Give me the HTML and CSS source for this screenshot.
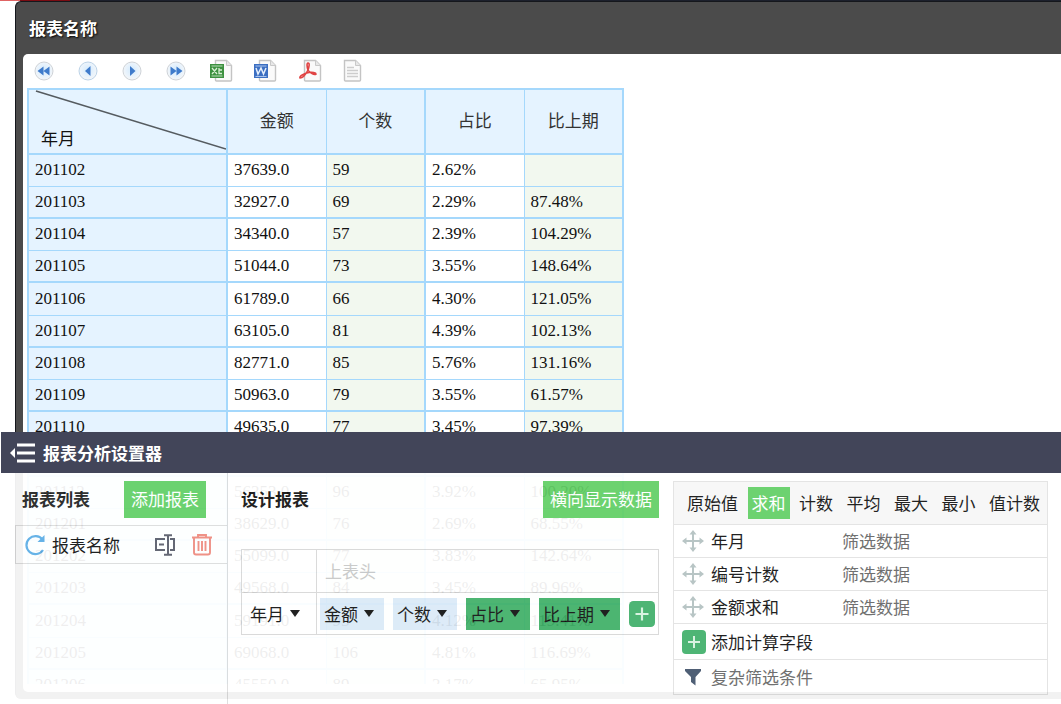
FILE: index.html
```html
<!DOCTYPE html>
<html lang="zh-CN">
<head>
<meta charset="utf-8">
<title>报表分析设置器</title>
<link rel="stylesheet" href="styles.css">
</head>
<body>
<svg class="defs" aria-hidden="true">
  <defs>
    <radialGradient id="ball" cx=".5" cy=".45" r=".55"><stop offset="0" stop-color="#d3eafc"/><stop offset=".65" stop-color="#e9f3fc"/><stop offset="1" stop-color="#f6f6f6"/></radialGradient>
    <g id="page"><path d="M4.500 1.500h11l5 5v14.500q0 1-1 1h-14q-1 0-1-1z" fill="#fafafa" stroke="#c4c4c4" stroke-width="1.400"/><path d="M15.500 1.500v5h5" fill="#e8e8e8" stroke="#c9c9c9"/></g>
    <g id="move" fill="none" stroke="#b3c1c1" stroke-width="2"><path d="M11 2v18M2 11h18"/><path d="M11 0l3.500 4.500h-7zM11 22l3.500-4.500h-7zM0 11l4.500-3.500v7zM22 11l-4.500-3.500v7z" fill="#b3c1c1" stroke="none"/></g>
    <g id="plus"><rect width="24" height="24" rx="4" fill="#41b06b"/><path d="M12 6v12M6 12h12" stroke="#d5f3df" stroke-width="2"/></g>
  </defs>
</svg>
<main class="window">
  <h1 class="window-title">报表名称</h1>
  <section class="report">
    <div class="toolbar">
      <button aria-label="首页"><svg width="20" height="20" viewBox="0 0 20 20"><circle cx="10" cy="10" r="9" fill="url(#ball)" stroke="#cfd3d8"/><path d="M9.500 5.500v9L3.500 10zM15.500 5.500v9l-6-4.500z" fill="#3f7bcb"/></svg></button>
      <button aria-label="上一页"><svg width="20" height="20" viewBox="0 0 20 20"><circle cx="10" cy="10" r="9" fill="url(#ball)" stroke="#bcd3e8"/><path d="M12.500 5v10L7 10z" fill="#3f7bcb"/></svg></button>
      <button aria-label="下一页"><svg width="20" height="20" viewBox="0 0 20 20"><circle cx="10" cy="10" r="9" fill="url(#ball)" stroke="#cfd3d8"/><path d="M8 5v10l5.500-5z" fill="#3f7bcb"/></svg></button>
      <button aria-label="末页"><svg width="20" height="20" viewBox="0 0 20 20"><circle cx="10" cy="10" r="9" fill="url(#ball)" stroke="#cfd3d8"/><path d="M4.500 5.500v9l6-4.500zM10.500 5.500v9l6-4.500z" fill="#3f7bcb"/></svg></button>
      <button aria-label="导出表格"><svg width="24" height="24" viewBox="0 0 24 24"><use href="#page" x="1"/><path d="M0 5h14v14H0z" fill="#3d9140"/><path d="M1.500 7h11M1.500 17h11" stroke="#b9dcb7"/><path d="M2 9l5 6M7 9l-5 6M9 9v5.500h3M9 11h3" stroke="#d9f0d5" stroke-width="1.300" fill="none"/></svg></button>
      <button aria-label="导出文档"><svg width="24" height="24" viewBox="0 0 24 24"><use href="#page" x="1"/><path d="M0 5h14v14H0z" fill="#3c6fc2"/><path d="M1.500 7h11M1.500 17.500h11" stroke="#a9c4ec"/><path d="M2 9l2 6 3-6 2.500 6L12 9" stroke="#e5effc" stroke-width="1.500" fill="none"/></svg></button>
      <button aria-label="导出打印稿"><svg width="24" height="24" viewBox="0 0 24 24"><use href="#page" x="2"/><path d="M10 4c2 0 1 4 0 7-2 4-5 8-8 8-1-2 5-5 9-5.500 3-.5 7 0 7 1.500-2 1.500-7-2-8-4-1-3-1.500-7 0-7z" fill="none" stroke="#e04343" stroke-width="1.600"/></svg></button>
      <button aria-label="导出文本"><svg width="24" height="24" viewBox="0 0 24 24"><use href="#page" x="-2"/><path d="M5 8.500h7M5 11.500h11M5 14.500h11M5 17.500h11" stroke="#cdcdcd" stroke-width="1.300"/></svg></button>
    </div>
    <div class="table-area">
    <table class="data">
      <colgroup><col class="col-month"><col><col><col><col></colgroup>
      <thead><tr><th class="corner"><svg viewBox="0 0 198 64" preserveAspectRatio="none" aria-hidden="true"><path d="M7 1L198 60" stroke="#555b60" stroke-width="1.500"/></svg><span>年月</span></th><th>金额</th><th>个数</th><th>占比</th><th>比上期</th></tr></thead>
      <tbody>
        <tr><th>201102</th><td>37639.0</td><td>59</td><td>2.62%</td><td></td></tr>
        <tr><th>201103</th><td>32927.0</td><td>69</td><td>2.29%</td><td>87.48%</td></tr>
        <tr><th>201104</th><td>34340.0</td><td>57</td><td>2.39%</td><td>104.29%</td></tr>
        <tr><th>201105</th><td>51044.0</td><td>73</td><td>3.55%</td><td>148.64%</td></tr>
        <tr><th>201106</th><td>61789.0</td><td>66</td><td>4.30%</td><td>121.05%</td></tr>
        <tr><th>201107</th><td>63105.0</td><td>81</td><td>4.39%</td><td>102.13%</td></tr>
        <tr><th>201108</th><td>82771.0</td><td>85</td><td>5.76%</td><td>131.16%</td></tr>
        <tr><th>201109</th><td>50963.0</td><td>79</td><td>3.55%</td><td>61.57%</td></tr>
        <tr><th>201110</th><td>49635.0</td><td>77</td><td>3.45%</td><td>97.39%</td></tr>
        <tr><th>201111</th><td>56241.0</td><td>88</td><td>3.91%</td><td>113.31%</td></tr>
        <tr><th>201112</th><td>56353.0</td><td>96</td><td>3.92%</td><td>100.20%</td></tr>
        <tr><th>201201</th><td>38629.0</td><td>76</td><td>2.69%</td><td>68.55%</td></tr>
        <tr><th>201202</th><td>55099.0</td><td>77</td><td>3.83%</td><td>142.64%</td></tr>
        <tr><th>201203</th><td>49568.0</td><td>84</td><td>3.45%</td><td>89.96%</td></tr>
        <tr><th>201204</th><td>59191.0</td><td>93</td><td>4.12%</td><td>119.41%</td></tr>
        <tr><th>201205</th><td>69068.0</td><td>106</td><td>4.81%</td><td>116.69%</td></tr>
        <tr><th>201206</th><td>45550.0</td><td>89</td><td>3.17%</td><td>65.95%</td></tr>
      </tbody>
    </table>
    </div>
  </section>
</main>

<aside class="designer">
  <header class="designer-bar">
    <button class="collapse" aria-label="收起"><svg width="26" height="20" viewBox="0 0 26 20"><path d="M5 5v10L0 10z" fill="#fff"/><path d="M7 2h18M7 10h18M7 18h18" stroke="#fff" stroke-width="2.800"/></svg></button>
    <h2>报表分析设置器</h2>
  </header>
  <div class="designer-body">
    <section class="list">
      <div class="list-head"><h3>报表列表</h3><button class="action">添加报表</button></div>
      <div class="list-item">
        <svg width="22" height="22" viewBox="0 0 22 22"><path d="M18.500 5.500A9 9 0 1 0 19 16" fill="none" stroke="#5eaee6" stroke-width="2.200"/><path d="M20.500 1v7h-7z" fill="#5eaee6"/></svg>
        <span class="item-name">报表名称</span>
        <button aria-label="重命名"><svg width="22" height="22" viewBox="0 0 22 22"><path d="M11 5H2v11h9M16 5h4v11h-4M5 10.500h5M10 1.200h8M10 20.800h8M14 1v20" fill="none" stroke="#5b5d6b" stroke-width="2"/></svg></button>
        <button aria-label="删除"><svg width="20" height="22" viewBox="0 0 20 22"><path d="M0 3.500h20M6 3V1h8v2M2 4v14.500q0 2 2 2h12q2 0 2-2V4M6.500 7v10M10 7v10M13.500 7v10" fill="none" stroke="#f08a7e" stroke-width="1.900"/></svg></button>
      </div>
    </section>
    <section class="design">
      <div class="design-head"><h3>设计报表</h3><button class="action">横向显示数据</button></div>
      <div class="layout">
        <div class="cell"></div>
        <div class="cell top-head">上表头</div>
        <div class="cell side-head"><button class="chip plain">年月<i class="arrow"></i></button></div>
        <div class="cell chips">
          <button class="chip">金额<i class="arrow"></i></button>
          <button class="chip">个数<i class="arrow"></i></button>
          <button class="chip calc">占比<i class="arrow"></i></button>
          <button class="chip calc">比上期<i class="arrow"></i></button>
          <button class="add" aria-label="添加"><svg width="26" height="26" viewBox="0 0 24 24"><use href="#plus"/></svg></button>
        </div>
      </div>
    </section>
    <section class="fields">
      <div class="modes">
        <button>原始值</button><button class="on">求和</button><button>计数</button><button>平均</button><button>最大</button><button>最小</button><button>值计数</button>
      </div>
      <div class="field"><svg width="22" height="22"><use href="#move"/></svg><span>年月</span><button>筛选数据</button></div>
      <div class="field"><svg width="22" height="22"><use href="#move"/></svg><span>编号计数</span><button>筛选数据</button></div>
      <div class="field"><svg width="22" height="22"><use href="#move"/></svg><span>金额求和</span><button>筛选数据</button></div>
      <div class="field tall"><svg width="24" height="24"><use href="#plus"/></svg><button class="dark">添加计算字段</button></div>
      <div class="field last"><svg width="22" height="18" viewBox="0 0 22 18"><path d="M3 1h16v2l-5.500 6v8.500L9 14V9L3 3z" fill="#42536b"/></svg><button>复杂筛选条件</button></div>
    </section>
  </div>
</aside>
</body>
</html>
```
FILE: styles.css
```css
* { box-sizing: border-box; }
body {
  margin: 0;
  height: 100vh;
  padding: 1px 0 5px 15px;
  overflow: hidden;
  background: #fff linear-gradient(to right, #e06464 20px, #7a0c12 20px 70px, #1c202c 70px) 0 0 / 100% 1px no-repeat;
  color: #111;
  font: 17px/24px "Noto Sans CJK SC", sans-serif;
}
h1, h2, h3 { margin: 0; font-size: 17px; line-height: 24px; }
button { margin: 0; padding: 0; border: 0; background: none; color: inherit; font: inherit; white-space: nowrap; cursor: pointer; }
svg { display: block; flex: none; }
.defs { position: absolute; width: 0; height: 0; }

.window {
  display: flex;
  flex-direction: column;
  height: 100%;
  padding: 0 0 7px 7px;
  border: solid #15171c;
  border-width: 1px 0 0 1px;
  border-radius: 6px 0 0 6px;
  background: #4b4b4b;
}
.window-title { padding: 14px 6px; color: #fff; text-shadow: 1px 1px 2px #000; }
.report {
  display: flex;
  flex: 1;
  flex-direction: column;
  min-height: 0;
  padding: 0 4px 8px;
  border-radius: 5px 0 0 5px;
  background: #fff;
}
.toolbar { display: flex; align-items: center; gap: 24px; height: 34px; padding-left: 7px; }
.toolbar button { width: 20px; }
.table-area { flex: 1; min-height: 0; overflow: hidden; }

.data { width: 597px; table-layout: fixed; border: 2px solid #a5d8fc; border-collapse: collapse; font: 17px/20px "Liberation Serif", "Noto Sans CJK SC", serif; }
.col-month { width: 199px; }
.data th, .data td { height: 32px; padding: 0 6px; border: 1px solid #a5d8fc; text-align: left; font-weight: 400; }
.data th { background: #e5f3ff; }
.data thead th { height: 65px; border-bottom-width: 2px; color: #333; text-align: center; }
.data td:nth-child(odd) { background: #f2f8ef; }
.data tr > :nth-child(1), .data tr > :nth-child(3), .data tr > :last-child { border-right-width: 2px; }
.data tbody tr:nth-child(even) > * { border-bottom-width: 2px; }
.data tbody tr:nth-child(5n) > * { height: 33px; }
.data thead .corner { position: relative; padding: 0 12px 3px; color: #111; text-align: left; vertical-align: bottom; }
.corner svg { position: absolute; inset: 0; width: 100%; height: 100%; }

.designer { position: fixed; right: 0; bottom: 0; left: 1px; }
.designer-bar { display: flex; align-items: center; gap: 7px; height: 41px; padding-left: 9px; background: #424559; color: #fff; }
.designer-body {
  display: grid;
  grid-template-columns: 227px 431px minmax(0, 1fr);
  height: 231px;
  background: #fff;
  opacity: .93;
}
.action { height: 37px; padding: 0 7px; background: #62cf66; color: #fff; }
.list { border-right: 1px solid #ddd; }
.list-head { display: flex; align-items: center; justify-content: space-between; height: 52px; padding: 0 21px; color: #222; }
.list-item { display: flex; align-items: center; height: 39px; margin-left: 14px; padding: 0 15px 0 8px; border: solid #ddd; border-width: 1px 0 1px 1px; background: #fff; }
.item-name { flex: 1; padding-left: 6px; }
.list-item button + button { margin-left: 16px; }

.design-head { display: flex; align-items: center; justify-content: space-between; height: 52px; padding-left: 13px; }
.layout { display: grid; grid-template-columns: 75px 1fr; grid-template-rows: 43px 42px; margin: 24px 0 0 13px; border: solid #d8d8d8; border-width: 1px 0 0 1px; }
.cell { display: flex; align-items: center; border: solid #d8d8d8; border-width: 0 1px 1px 0; }
.top-head { padding-left: 8px; color: #c8c8c8; }
.side-head { padding-left: 4px; }
.chips { gap: 9px; padding-left: 3px; }
.chip { display: flex; align-items: center; gap: 6px; height: 32px; padding: 0 10px 0 4px; background: #dbeaf8; }
.plain { background: none; }
.calc { background: #40b068; }
.arrow { border: solid transparent; border-width: 7px 5px 0; border-top-color: #111; }

.fields { align-self: start; margin: 8px 13px 0 14px; border: 1px solid #e2e2e2; }
.modes { display: flex; align-items: center; justify-content: space-between; height: 43px; padding: 0 3px 0 9px; border-bottom: 1px solid #e2e2e2; background: #f7f7f7; }
.modes button { height: 32px; padding: 0 4px; }
.modes .on { background: #62cf66; color: #fff; }
.field { display: grid; grid-template-columns: 24px 126px 1fr; column-gap: 5px; align-items: center; height: 33px; padding-left: 8px; border-bottom: 1px solid #e2e2e2; }
.field button { justify-self: start; color: #666; }
.field .dark { color: #111; }
.tall { height: 36px; }
.last { height: 34px; border-bottom: 0; }
```
